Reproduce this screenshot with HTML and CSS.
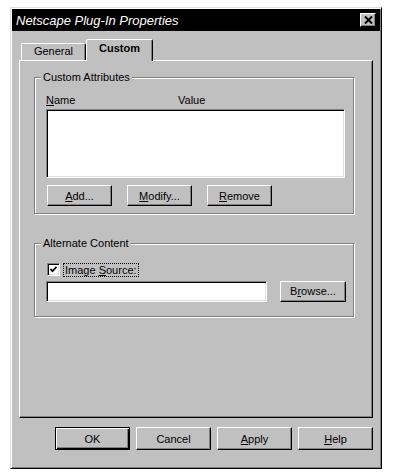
FILE: index.html
```html
<!DOCTYPE html>
<html lang="en">
<head>
    <meta charset="UTF-8">
    <title>Netscape Plug-In Properties</title>
    <link rel="stylesheet" href="styles.css">
</head>
<body>
    <div class="dialog">
        <div class="titlebar">
            <span class="title">Netscape Plug-In Properties</span>
            <span class="close-btn">
                <svg width="9" height="8" viewBox="0 0 9 8"><path d="M1 0.5 L8 7.5 M8 0.5 L1 7.5" stroke="#000" stroke-width="2"/></svg>
            </span>
        </div>
        <div class="dialog-body">
            <div class="tabs">
                <div class="tab">General</div>
                <div class="tab tab-active">Custom</div>
            </div>
            <div class="tab-panel">
                <fieldset class="group">
                    <legend>Custom Attributes</legend>
                    <div class="attrs-inner">
                        <div class="list-header">
                            <span class="col-name"><u>N</u>ame</span>
                            <span>Value</span>
                        </div>
                        <div class="listbox sunken"></div>
                        <div class="btn-row">
                            <button class="btn btn-small"><u>A</u>dd...</button>
                            <button class="btn btn-small"><u>M</u>odify...</button>
                            <button class="btn btn-small"><u>R</u>emove</button>
                        </div>
                    </div>
                </fieldset>
                <fieldset class="group group-alt">
                    <legend>Alternate Content</legend>
                    <div class="alt-inner">
                        <div class="check-row">
                            <span class="checkbox sunken">
                                <svg width="7" height="7" viewBox="0 0 7 7"><path d="M0.5 3 L2.5 5.2 L6.5 0.8" fill="none" stroke="#000" stroke-width="1.8"/></svg>
                            </span>
                            <span class="check-label">Image <u>S</u>ource:</span>
                        </div>
                        <div class="source-row">
                            <div class="textfield sunken"></div>
                            <button class="btn btn-browse">B<u>r</u>owse...</button>
                        </div>
                    </div>
                </fieldset>
            </div>
            <div class="footer">
                <button class="btn btn-footer btn-default">OK</button>
                <button class="btn btn-footer">Cancel</button>
                <button class="btn btn-footer"><u>A</u>pply</button>
                <button class="btn btn-footer"><u>H</u>elp</button>
            </div>
        </div>
    </div>
</body>
</html>
```

FILE: styles.css
```css
* {
    box-sizing: border-box;
}
body {
    margin: 0;
    background-color: #ffffff;
    font-family: "Liberation Sans", Arial, sans-serif;
    font-size: 11px;
    color: #000;
}
.dialog {
    width: 372px;
    height: 462px;
    margin: 7px 0 0 10px;
    padding: 1px;
    background-color: #c0c0c0;
    border: 1px solid;
    border-color: #dfdfdf #000 #000 #dfdfdf;
    box-shadow: inset 1px 1px #fff, inset -1px -1px #808080;
}
.titlebar {
    height: 22px;
    background-color: #000;
    color: #fff;
    display: flex;
    align-items: center;
    justify-content: space-between;
    padding: 0 4px;
}
.title {
    font-style: italic;
    font-size: 13px;
}
.close-btn {
    width: 16px;
    height: 14px;
    background-color: #c0c0c0;
    border: 1px solid;
    border-color: #fff #000 #000 #fff;
    box-shadow: inset -1px -1px #808080;
    display: flex;
    align-items: center;
    justify-content: center;
}
.dialog-body {
    padding: 8px 7px 0;
}
.tabs {
    display: flex;
    align-items: flex-end;
    height: 21px;
    padding-left: 2px;
}
.tab {
    width: 65px;
    height: 17px;
    border: 1px solid;
    border-bottom: 0;
    border-color: #fff #000 transparent #fff;
    border-radius: 2px 2px 0 0;
    box-shadow: inset -1px 0 #808080;
    text-align: center;
    line-height: 15px;
}
.tab-active {
    width: 67px;
    height: 22px;
    margin-bottom: -1px;
    position: relative;
    z-index: 1;
    background-color: #c0c0c0;
    font-weight: bold;
    line-height: 17px;
}
.tab-panel {
    height: 358px;
    border: 1px solid;
    border-color: #fff #000 #000 #fff;
    box-shadow: inset -1px -1px #808080;
    padding: 10px 0 0 14px;
}
.group {
    width: 320px;
    margin: 0;
    padding: 0;
    border: 1px solid #808080;
    box-shadow: inset 1px 1px #fff, 1px 1px #fff;
}
.group legend {
    margin-left: 6px;
    padding: 0 2px;
    line-height: 12px;
    background-color: #c0c0c0;
}
.group-alt {
    margin-top: 23px;
}
.attrs-inner {
    padding: 11px 7px 7px 11px;
}
.list-header {
    display: flex;
    line-height: 13px;
    margin-bottom: 2px;
}
.col-name {
    width: 132px;
}
.sunken {
    border: 1px solid;
    border-color: #808080 #fff #fff #808080;
    box-shadow: inset 1px 1px #000, inset -1px -1px #dfdfdf;
    background-color: #fff;
}
.listbox {
    width: 299px;
    height: 69px;
}
.btn {
    font: inherit;
    color: #000;
    background-color: #c0c0c0;
    border: 1px solid;
    border-color: #fff #000 #000 #fff;
    box-shadow: inset -1px -1px #808080;
    padding: 0;
}
.btn-row {
    display: flex;
    gap: 15px;
    margin-top: 7px;
    padding-left: 1px;
}
.btn-small {
    width: 65px;
    height: 21px;
}
.alt-inner {
    padding: 13px 7px 14px 11px;
}
.check-row {
    display: flex;
    align-items: center;
    gap: 3px;
    height: 15px;
    padding-left: 1px;
}
.checkbox {
    width: 13px;
    height: 13px;
    display: flex;
    align-items: center;
    justify-content: center;
}
.check-label {
    border: 1px dotted #000;
    padding: 0 1px;
    line-height: 12px;
}
.source-row {
    display: flex;
    align-items: center;
    height: 22px;
    margin-top: 3px;
}
.textfield {
    width: 221px;
    height: 21px;
}
.btn-browse {
    width: 66px;
    height: 21px;
    margin-left: 13px;
}
.footer {
    display: flex;
    justify-content: flex-end;
    gap: 6px;
    padding-top: 9px;
}
.btn-footer {
    width: 75px;
    height: 23px;
}
.btn-default {
    border-color: #000;
    box-shadow: inset 1px 1px #fff, inset -1px -1px #000, inset -2px -2px #808080;
}
```
